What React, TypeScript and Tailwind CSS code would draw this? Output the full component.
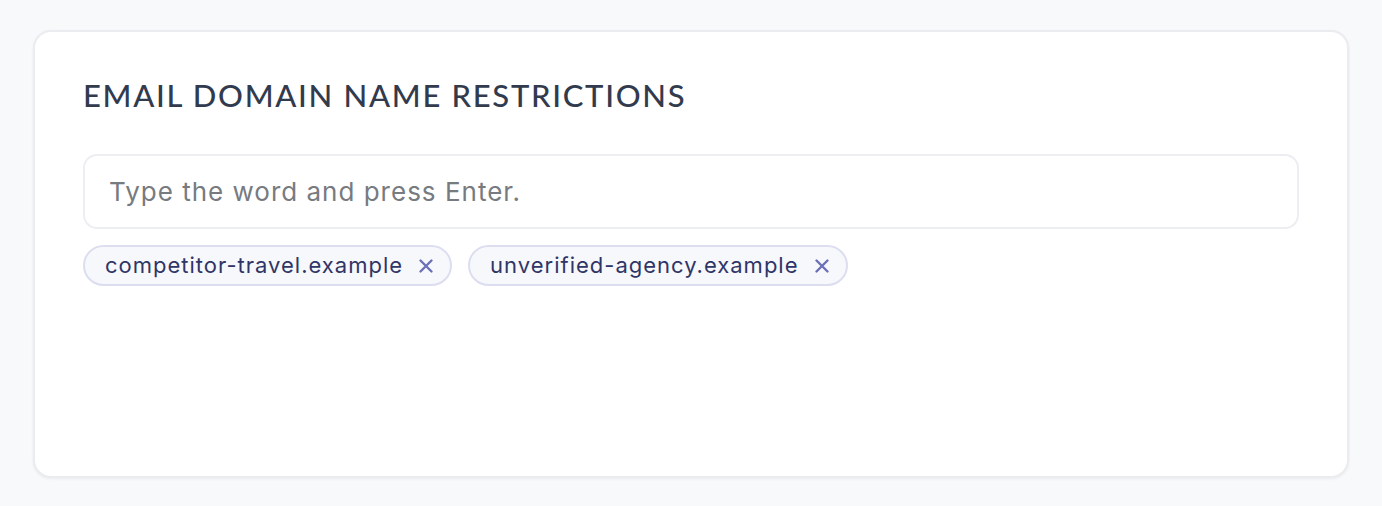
import React from "react";

function XIcon() {
  return (
    <svg width="16" height="16" viewBox="0 0 16 16" fill="none" aria-hidden="true">
      <path d="M2.5 2.5L13.5 13.5M13.5 2.5L2.5 13.5" stroke="#6b70b8" strokeWidth="2.4" strokeLinecap="round" />
    </svg>
  );
}

function Chip({ label }: { label: string }) {
  return (
    <span className="flex h-[41px] items-center gap-[15px] rounded-full border-2 border-[#dcdef0] bg-[#f7f8fc] pl-[20px] pr-[16px] text-[22px] tracking-[1px] text-[#2f3566]">
      <span>{label}</span>
      <XIcon />
    </span>
  );
}

export default function App() {
  return (
    <div className="min-h-[506px] w-full bg-[#f8f9fb] px-[33px] pt-[30px] pb-[28px]" style={{ fontFamily: "Inter, 'Noto Sans', sans-serif" }}>
      <div className="h-[448px] rounded-[18px] border-2 border-[#ebecef] bg-white px-[48px] pt-[41px] shadow-[0_1px_3px_rgba(0,0,0,0.06)]">
        <h2
          className="text-[31px] font-medium leading-[44px] tracking-[1.7px] text-[#323b4e]"
          style={{ fontFamily: "Lato, 'Open Sans', sans-serif" }}
        >
          EMAIL DOMAIN NAME RESTRICTIONS
        </h2>
        <div className="mt-[37px] flex h-[75px] items-center rounded-[14px] border-2 border-[#eceef1] px-[24px]">
          <span className="text-[26px] tracking-[1px] text-[#777b80]">Type the word and press Enter.</span>
        </div>
        <div className="mt-[16px] flex gap-[16px]">
          <Chip label="competitor-travel.example" />
          <Chip label="unverified-agency.example" />
        </div>
      </div>
    </div>
  );
}
